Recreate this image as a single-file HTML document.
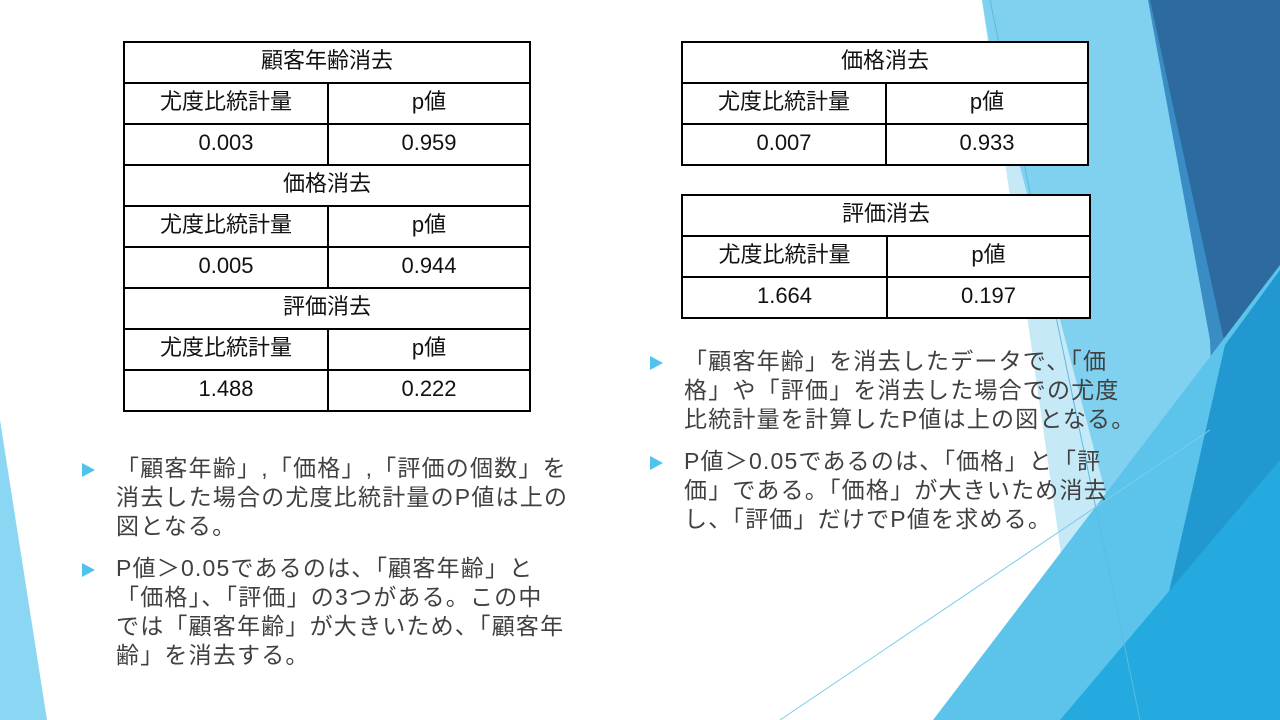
<!DOCTYPE html>
<html><head><meta charset="utf-8"><style>
*{margin:0;padding:0;box-sizing:border-box}
body{width:1280px;height:720px;position:relative;overflow:hidden;background:#fff;font-family:"Liberation Sans","Noto Sans CJK JP",sans-serif;color:#000}
svg.bg{position:absolute;left:0;top:0}
table{position:absolute;border-collapse:collapse;font-size:22px;background:#fff}
td{border:2px solid #000;text-align:center;height:41px;padding:0 0 4px;line-height:34px;color:#111}
.b{position:absolute;font-size:23px;line-height:29px;color:#404040;letter-spacing:1.2px;white-space:nowrap}
.b p{position:relative;padding-left:36px;margin-bottom:13px}
.b p:before{content:"";position:absolute;left:2px;top:9px;border-left:13px solid #4fc3ec;border-top:7px solid transparent;border-bottom:7px solid transparent}
</style></head><body>
<svg class="bg" width="1280" height="720">
<polygon points="0,420 0,720 47,720" fill="#8bd6f3"/>
<polygon points="982,0 1150,0 1215,345 1200,720 1085,720" fill="#80d0f0"/>
<polygon points="982,0 992,60 1165,720 1085,720" fill="#c6e9f8"/>
<polygon points="1148,0 1280,0 1280,720 1225,720 1210,340" fill="#3a8cc4"/>
<polygon points="1150,0 1280,0 1280,270 1225,345" fill="#2c6aa0"/>
<polygon points="933,720 1280,265 1280,720" fill="#5cc4eb"/>
<polygon points="1225,345 1280,270 1280,720 1140,720" fill="#2199d0"/>
<polygon points="1060,720 1280,460 1280,720" fill="#24aadf"/>
<line x1="990" y1="0" x2="1140" y2="720" stroke="#5bbbe0" stroke-width="1"/>
<line x1="780" y1="720" x2="1210" y2="430" stroke="#7ccbec" stroke-width="1"/>
</svg>
<table style="left:123px;top:41px;width:408px">
<tr><td colspan="2">顧客年齢消去</td></tr>
<tr><td style="width:204px">尤度比統計量</td><td>p値</td></tr>
<tr><td>0.003</td><td>0.959</td></tr>
<tr><td colspan="2">価格消去</td></tr>
<tr><td>尤度比統計量</td><td>p値</td></tr>
<tr><td>0.005</td><td>0.944</td></tr>
<tr><td colspan="2">評価消去</td></tr>
<tr><td>尤度比統計量</td><td>p値</td></tr>
<tr><td>1.488</td><td>0.222</td></tr>
</table>
<table style="left:681px;top:41px;width:408px">
<tr><td colspan="2">価格消去</td></tr>
<tr><td style="width:204px">尤度比統計量</td><td>p値</td></tr>
<tr><td>0.007</td><td>0.933</td></tr>
</table>
<table style="left:681px;top:194px;width:410px">
<tr><td colspan="2">評価消去</td></tr>
<tr><td style="width:205px">尤度比統計量</td><td>p値</td></tr>
<tr><td>1.664</td><td>0.197</td></tr>
</table>
<div class="b" style="left:80px;top:454px">
<p>「顧客年齢」,「価格」,「評価の個数」を<br>消去した場合の尤度比統計量のP値は上の<br>図となる。</p>
<p>P値＞0.05であるのは、「顧客年齢」と<br>「価格」、「評価」の3つがある。この中<br>では「顧客年齢」が大きいため、「顧客年<br>齢」を消去する。</p>
</div>
<div class="b" style="left:648px;top:347px">
<p>「顧客年齢」を消去したデータで、「価<br>格」や「評価」を消去した場合での尤度<br>比統計量を計算したP値は上の図となる。</p>
<p>P値＞0.05であるのは、「価格」と「評<br>価」である。「価格」が大きいため消去<br>し、「評価」だけでP値を求める。</p>
</div>
</body></html>
